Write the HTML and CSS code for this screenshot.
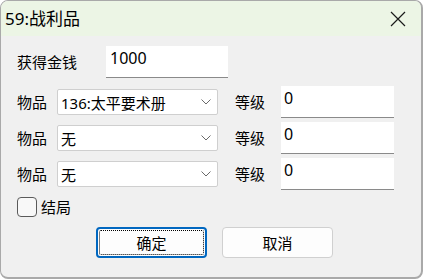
FILE: index.html
```html
<!DOCTYPE html>
<html lang="zh-CN">

<head>
    <meta charset="UTF-8">
    <title>59:战利品</title>
    <link rel="stylesheet" href="styles.css">
</head>

<body>
    <div class="window">
        <div class="titlebar">
            <span class="title">59:战利品</span>
            <svg class="close" width="16" height="16" viewBox="0 0 16 16">
                <path d="M1 1L15 15M15 1L1 15" stroke="#1a1a1a" stroke-width="1.2" fill="none"/>
            </svg>
        </div>
        <div class="content">
            <div class="row money-row">
                <span class="label money-label">获得金钱</span>
                <div class="edit money-edit">1000</div>
            </div>
            <div class="row item-row first">
                <span class="label">物品</span>
                <div class="combo">
                    <span>136:太平要术册</span>
                    <svg class="chevron" width="10" height="6" viewBox="0 0 10 6">
                        <path d="M0.5 0.5L5 5L9.5 0.5" stroke="#6a6a6a" stroke-width="1" fill="none"/>
                    </svg>
                </div>
                <span class="label level-label">等级</span>
                <div class="edit level-edit">0</div>
            </div>
            <div class="row item-row">
                <span class="label">物品</span>
                <div class="combo">
                    <span>无</span>
                    <svg class="chevron" width="10" height="6" viewBox="0 0 10 6">
                        <path d="M0.5 0.5L5 5L9.5 0.5" stroke="#6a6a6a" stroke-width="1" fill="none"/>
                    </svg>
                </div>
                <span class="label level-label">等级</span>
                <div class="edit level-edit">0</div>
            </div>
            <div class="row item-row">
                <span class="label">物品</span>
                <div class="combo">
                    <span>无</span>
                    <svg class="chevron" width="10" height="6" viewBox="0 0 10 6">
                        <path d="M0.5 0.5L5 5L9.5 0.5" stroke="#6a6a6a" stroke-width="1" fill="none"/>
                    </svg>
                </div>
                <span class="label level-label">等级</span>
                <div class="edit level-edit">0</div>
            </div>
            <div class="row check-row">
                <span class="checkbox"></span>
                <span class="label">结局</span>
            </div>
            <div class="row button-row">
                <button class="btn default"><span class="focus">确定</span></button>
                <button class="btn">取消</button>
            </div>
        </div>
    </div>
</body>

</html>
```

FILE: styles.css
```css
* {
    margin: 0;
    padding: 0;
    box-sizing: border-box;
}

body {
    font-family: "Noto Sans", "Noto Sans CJK SC", sans-serif;
    font-size: 15px;
    color: #000;
    background-color: #ffffff;
}

.window {
    width: 423px;
    height: 279px;
    border: 1px solid #a9a9a9;
    border-right-width: 2px;
    border-bottom-width: 2px;
    border-radius: 8px;
    background-color: #f0f0f0;
    overflow: hidden;
    display: flex;
    flex-direction: column;
}

.titlebar {
    height: 35px;
    background-color: #ecf5e5;
    display: flex;
    align-items: center;
    justify-content: space-between;
    padding: 0 15px 0 4px;
}

.title {
    font-size: 17px;
    line-height: 20px;
}

.close {
    display: block;
}

.content {
    padding-left: 16px;
    display: flex;
    flex-direction: column;
}

.row {
    display: flex;
    align-items: center;
}

.label {
    line-height: 18px;
}

.money-row {
    margin-top: 10px;
}

.money-label {
    width: 89px;
}

.edit {
    height: 32px;
    background-color: #fff;
    border-bottom: 1px solid #8a8a8a;
    padding: 3px 4px 0;
    line-height: 18px;
    font-size: 16px;
}

.money-edit {
    width: 122px;
}

.item-row {
    margin-top: 4px;
}

.item-row.first {
    margin-top: 8px;
}

.item-row .label:first-child {
    width: 40px;
}

.combo {
    width: 161px;
    height: 26px;
    background-color: #fff;
    border: 1px solid #cfcfcf;
    border-radius: 2px;
    display: flex;
    align-items: center;
    justify-content: space-between;
    padding: 0 6px 0 3px;
}

.chevron {
    display: block;
}

.level-label {
    margin-left: 17px;
    width: 46px;
}

.level-edit {
    width: 113px;
    padding-left: 3px;
}

.check-row {
    margin-top: 7px;
}

.checkbox {
    width: 20px;
    height: 20px;
    border: 1px solid #5a5a5a;
    border-radius: 4px;
    background-color: #f8f8f8;
    margin-right: 4px;
}

.button-row {
    margin-top: 10px;
    padding-left: 79px;
    gap: 15px;
}

.btn {
    width: 111px;
    height: 31px;
    font-family: inherit;
    font-size: 15px;
    background-color: #fdfdfd;
    border: 1px solid #d0d0d0;
    border-radius: 4px;
    color: #000;
}

.btn.default {
    border: 2px solid #0067c0;
    padding: 1px;
}

.btn .focus {
    display: flex;
    align-items: center;
    justify-content: center;
    height: 100%;
    border: 1px dotted #000;
    border-radius: 2px;
}
```
